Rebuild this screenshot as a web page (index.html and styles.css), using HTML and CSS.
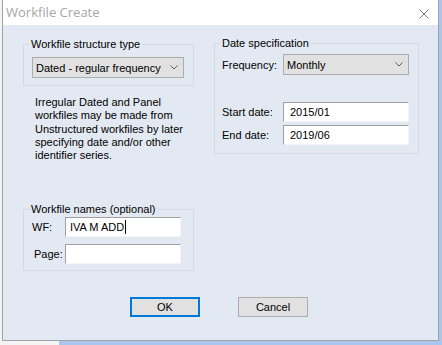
FILE: index.html
```html
<!DOCTYPE html>
<html lang="en">
<head>
  <meta charset="UTF-8" />
  <title>Workfile Create</title>
  <link rel="stylesheet" href="styles.css">
</head>
<body>
  <div class="window">
    <div class="titlebar">
      <span class="title">Workfile Create</span>
      <svg class="close" width="10" height="10" viewBox="0 0 10 10">
        <path d="M0.5 0.5 L9.5 9.5 M9.5 0.5 L0.5 9.5" stroke="#777" stroke-width="1" fill="none" />
      </svg>
    </div>

    <div class="client">
      <div class="columns">
        <div class="col-left">
          <fieldset class="group group-structure">
            <legend>Workfile structure type</legend>
            <div class="combo combo-structure">
              <span>Dated - regular frequency</span>
              <svg class="chevron" width="8" height="5" viewBox="0 0 8 5"><path d="M0.5 0.5 L4 4 L7.5 0.5" stroke="#606060" fill="none" /></svg>
            </div>
          </fieldset>

          <p class="note">Irregular Dated and Panel<br>workfiles may be made from<br>Unstructured workfiles by later<br>specifying date and/or other<br>identifier series.</p>

          <fieldset class="group group-names">
            <legend>Workfile names (optional)</legend>
            <div class="names-grid">
              <label class="lbl-wf">WF:</label>
              <div class="edit">IVA M ADD<span class="caret"></span></div>
              <label class="lbl-page">Page:</label>
              <div class="edit"></div>
            </div>
          </fieldset>
        </div>

        <div class="col-right">
          <fieldset class="group group-dates">
            <legend>Date specification</legend>
            <div class="date-row date-row-freq">
              <label>Frequency:</label>
              <div class="combo combo-freq">
                <span>Monthly</span>
                <svg class="chevron" width="8" height="5" viewBox="0 0 8 5"><path d="M0.5 0.5 L4 4 L7.5 0.5" stroke="#606060" fill="none" /></svg>
              </div>
            </div>
            <div class="date-row date-row-start">
              <label>Start date:</label>
              <div class="edit edit-date">2015/01</div>
            </div>
            <div class="date-row date-row-end">
              <label>End date:</label>
              <div class="edit edit-date">2019/06</div>
            </div>
          </fieldset>
        </div>
      </div>

      <div class="buttons">
        <button class="btn btn-default">OK</button>
        <button class="btn">Cancel</button>
      </div>
    </div>
  </div>
</body>
</html>
```

FILE: styles.css
```css
/* Desktop behind the dialog */
body {
  margin: 0;
  font-family: "Liberation Sans", Arial, sans-serif;
  font-size: 11px;
  color: #000;
  background: linear-gradient(to right, #f4f4f4 0, #f4f4f4 59px, #a9c7ee 59px);
  height: 345px;
  overflow: hidden;
}

.window {
  margin-left: 2px;
  width: 437px;
  height: 341px;
  box-sizing: border-box;
  border: 1px solid #a3a3a3;
  border-top: none;
  display: flex;
  flex-direction: column;
}

.titlebar {
  height: 25px;
  background: #fff;
  display: flex;
  align-items: center;
  justify-content: space-between;
}

.title {
  font-family: "Open Sans", "Noto Sans", sans-serif;
  font-size: 13px;
  color: #a6a6a6;
  padding-left: 3px;
  padding-bottom: 1px;
}

.close {
  align-self: flex-start;
  margin-top: 9px;
  margin-right: 9px;
}

.client {
  flex: 1;
  background: #e3e9f2;
  padding: 12px 0 0 20px;
}

.columns {
  display: flex;
  align-items: flex-start;
  gap: 20px;
}

.col-left {
  width: 171px;
  margin-top: 1px;
}

.col-right {
  width: 205px;
}

/* Group boxes */
.group {
  margin: 0;
  min-width: 0;
  border: 1px solid #d5d9df;
  padding: 0 0 8px 5px;
}

.group legend {
  padding: 0 2px;
  line-height: 13px;
}

.combo {
  display: flex;
  align-items: center;
  justify-content: space-between;
  height: 21px;
  box-sizing: border-box;
  border: 1px solid #adadad;
  background: #e1e1e1;
  padding: 0 5px 0 3px;
}

.combo-structure {
  width: 152px;
  margin: 6px 0 0 3px;
}

.group-structure {
  padding-bottom: 7px;
}

.note {
  margin: 10px 0 0 12px;
  line-height: 13.3px;
}

.edit {
  height: 20px;
  box-sizing: border-box;
  background: #fff;
  border: 1px solid;
  border-color: #a0a0a0 #f4f4f4 #f4f4f4 #a0a0a0;
  padding: 0 4px;
  display: flex;
  align-items: center;
}

.caret {
  display: inline-block;
  width: 1px;
  height: 14px;
  background: #000;
  margin-left: 1px;
}

.group-names {
  margin-top: 41px;
  padding-bottom: 6px;
}

.names-grid {
  display: grid;
  grid-template-columns: 36px 116px;
  row-gap: 7px;
  align-items: center;
  margin-top: 1px;
}

.lbl-wf {
  padding-left: 3px;
}

.lbl-page {
  padding-left: 5px;
}

/* Date specification rows */
.date-row {
  display: flex;
  align-items: center;
}

.date-row label {
  width: 63px;
  padding-left: 2px;
  box-sizing: border-box;
}

.combo-freq,
.edit-date {
  width: 126px;
}

.date-row-freq {
  margin-top: 4px;
}

.date-row-start {
  margin-top: 27px;
}

.date-row-end {
  margin-top: 3px;
}

.edit-date {
  padding-left: 6px;
}

/* Buttons */
.buttons {
  display: flex;
  gap: 38px;
  margin: 26px 0 0 107px;
}

.btn {
  width: 70px;
  height: 20px;
  box-sizing: border-box;
  border: 1px solid #adadad;
  background: #e1e1e1;
  font-family: inherit;
  font-size: 11px;
  color: #000;
  padding: 0;
}

.btn-default {
  border: 2px solid #0078d7;
}
```
